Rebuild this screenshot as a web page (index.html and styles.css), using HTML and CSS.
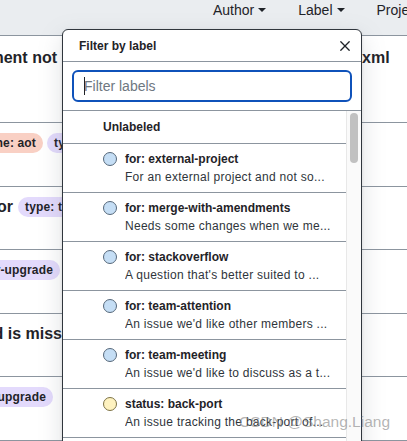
FILE: index.html
```html
<!DOCTYPE html>
<html lang="en">
<head>
<meta charset="utf-8">
<title>Filter by label</title>
<link rel="stylesheet" href="styles.css">
</head>
<body>
<div class="page">
  <header class="topbar">
    <span class="menu">Author<i class="caret"></i></span>
    <span class="menu">Label<i class="caret"></i></span>
    <span class="menu">Projects<i class="caret"></i></span>
  </header>

  <div class="issues">
    <div class="row row-a">
      <div class="cell left pad5"><span class="title">Environment not</span></div>
      <div class="cell mid"></div>
      <div class="cell right"><span class="title">xml</span></div>
    </div>
    <div class="row">
      <div class="cell left gap4"><span class="pill salmon">theme: aot</span><span class="pill lav peek w15">type: task</span></div>
      <div class="cell mid"></div>
      <div class="cell right"></div>
    </div>
    <div class="row">
      <div class="cell left gap5"><span class="title">Processor</span><span class="pill lav peek w44">type: task</span></div>
      <div class="cell mid"></div>
      <div class="cell right"></div>
    </div>
    <div class="row">
      <div class="cell left pad2"><span class="pill lav">type: dependency-upgrade</span></div>
      <div class="cell mid"></div>
      <div class="cell right"></div>
    </div>
    <div class="row">
      <div class="cell left"><span class="title hide-ing">Required field is missing</span></div>
      <div class="cell mid"></div>
      <div class="cell right"></div>
    </div>
    <div class="row">
      <div class="cell left pad9"><span class="pill lav">type: dependency-upgrade</span></div>
      <div class="cell mid"></div>
      <div class="cell right"></div>
    </div>
    <div class="row"></div>
  </div>

  <div class="popup">
    <div class="popup-head">
      <span class="popup-title">Filter by label</span>
      <svg class="close" width="16" height="16" viewBox="0 0 16 16" aria-label="Close"><path d="M3.8 3.8 L12.2 12.2 M12.2 3.8 L3.8 12.2" stroke="#1f2328" stroke-width="1.3" stroke-linecap="round" fill="none"/></svg>
    </div>
    <div class="filter">
      <div class="field">
        <span class="text-caret"></span>
        <input class="field-input" type="text" placeholder="Filter labels">
      </div>
    </div>
    <div class="popup-body">
      <div class="list">
        <div class="item unlabeled">Unlabeled</div>
        <div class="item">
          <span class="dot blue"></span>
          <div class="item-text"><div class="name">for: external-project</div><div class="desc">For an external project and not so...</div></div>
        </div>
        <div class="item">
          <span class="dot blue"></span>
          <div class="item-text"><div class="name">for: merge-with-amendments</div><div class="desc">Needs some changes when we me...</div></div>
        </div>
        <div class="item">
          <span class="dot blue"></span>
          <div class="item-text"><div class="name">for: stackoverflow</div><div class="desc">A question that's better suited to ...</div></div>
        </div>
        <div class="item">
          <span class="dot blue"></span>
          <div class="item-text"><div class="name">for: team-attention</div><div class="desc">An issue we'd like other members ...</div></div>
        </div>
        <div class="item">
          <span class="dot blue"></span>
          <div class="item-text"><div class="name">for: team-meeting</div><div class="desc">An issue we'd like to discuss as a t...</div></div>
        </div>
        <div class="item">
          <span class="dot yellow"></span>
          <div class="item-text"><div class="name">status: back-port</div><div class="desc">An issue tracking the back-port of...</div></div>
        </div>
        <div class="item">
          <span class="dot yellow"></span>
          <div class="item-text"><div class="name">status: blocked</div><div class="desc">An issue that's blocked on an exte...</div></div>
        </div>
      </div>
      <div class="scroll"><div class="thumb"></div></div>
    </div>
  </div>

  <div class="watermark">CSDN @Shang.Liang</div>
</div>
</body>
</html>
```

FILE: styles.css
```css
html, body {
  margin: 0;
  padding: 0;
  width: 407px;
  height: 441px;
  overflow: hidden;
  background: #ffffff;
  font-family: "Liberation Sans", Arial, sans-serif;
  color: #1f2328;
}

.page {
  position: relative;
  width: 407px;
  height: 441px;
  overflow: hidden;
}

/* top bar */
.topbar {
  display: flex;
  gap: 32px;
  height: 35px;
  padding-left: 213px;
  background: #eaedf0;
  border-bottom: 1px solid #8c959f;
  white-space: nowrap;
  font-size: 14px;
  line-height: 20px;
  color: #1f2328;
}
.menu {
  display: flex;
  align-items: center;
  height: 20px;
  flex-shrink: 0;
}
.caret {
  display: inline-block;
  width: 0;
  height: 0;
  margin-left: 4px;
  border-top: 4px solid #1f2328;
  border-left: 4px solid transparent;
  border-right: 4px solid transparent;
}

/* issue rows behind the popup */
.row {
  display: grid;
  grid-template-columns: 62px 300px 45px;
  height: 62.5px;
  border-bottom: 1px solid #8c959f;
}
.row-a { height: 86px; }
.cell {
  display: flex;
  align-items: center;
  height: 20px;
  padding-top: 10px;
  white-space: nowrap;
  overflow: hidden;
}
.row-a .cell { height: 24px; }
.left { justify-content: flex-end; }
.right { justify-content: flex-start; }
.pad2 { padding-right: 2px; }
.pad5 { padding-right: 5px; }
.pad9 { padding-right: 9px; }
.gap4 { gap: 4px; }
.gap5 { gap: 5px; }

.title {
  font-size: 16px;
  font-weight: 700;
  line-height: 24px;
  flex-shrink: 0;
  color: #1f2328;
}
.hide-ing { margin-right: -24px; }

.pill {
  display: inline-flex;
  align-items: center;
  flex-shrink: 0;
  height: 20px;
  padding: 0 7px;
  border-radius: 10px;
  font-size: 12px;
  font-weight: 700;
  line-height: 18px;
  letter-spacing: 0.15px;
  color: #1f2328;
}
.salmon { background: #f9d0c4; }
.lav { background: #e3dafc; }
.peek {
  overflow: hidden;
  padding-right: 0;
  border-radius: 10px 0 0 10px;
  justify-content: flex-start;
}
.w15 { width: 8px; }
.w44 { width: 37px; }

/* popup */
.popup {
  position: absolute;
  left: 62px;
  top: 29px;
  width: 300px;
  height: 440px;
  box-sizing: border-box;
  background: #ffffff;
  border: 1px solid #30363d;
  border-radius: 6px 6px 0 0;
  box-shadow: 0 8px 24px rgba(110, 119, 129, 0.22), 0 1px 3px rgba(31, 35, 40, 0.12);
  overflow: hidden;
  display: flex;
  flex-direction: column;
}
.popup-head {
  display: flex;
  align-items: center;
  justify-content: space-between;
  height: 31px;
  padding: 0 8px 0 16px;
  border-bottom: 1px solid #8c959f;
  flex-shrink: 0;
}
.popup-title {
  font-size: 12px;
  font-weight: 700;
  line-height: 18px;
}
.close { display: block; }

.filter {
  padding: 8px 9px;
  border-bottom: 1px solid #8c959f;
  flex-shrink: 0;
}
.field {
  position: relative;
  height: 32px;
  box-sizing: border-box;
  border: 2px solid #0f52ba;
  border-radius: 6px;
  display: flex;
  align-items: center;
  padding: 0 10px;
}
.field-input {
  flex: 1;
  min-width: 0;
  border: 0;
  outline: none;
  padding: 0;
  margin: 0;
  background: transparent;
  font-family: "Liberation Sans", Arial, sans-serif;
  font-size: 14px;
  line-height: 20px;
  color: #1f2328;
}
.field-input::placeholder { color: #6e7781; }
.text-caret {
  position: absolute;
  left: 10px;
  top: 5px;
  width: 1px;
  height: 18px;
  background: #1f2328;
}

.popup-body {
  display: flex;
  flex: 1;
  min-height: 0;
}
.list {
  flex: 1;
  min-width: 0;
}
.item {
  display: flex;
  align-items: flex-start;
  gap: 8px;
  padding: 6px 16px 6px 40px;
  border-bottom: 1px solid #8c959f;
}
.unlabeled {
  padding: 7px 16px 7px 40px;
  font-size: 12px;
  font-weight: 700;
  line-height: 18px;
}
.dot {
  flex-shrink: 0;
  width: 14px;
  height: 14px;
  box-sizing: border-box;
  margin-top: 2px;
  border-radius: 50%;
}
.blue { background: #c5def5; border: 1px solid #56687a; }
.yellow { background: #fef2c0; border: 1px solid #7d7245; }
.item-text {
  min-width: 0;
  white-space: nowrap;
}
.name {
  font-size: 12px;
  font-weight: 700;
  line-height: 18px;
  color: #1f2328;
}
.desc {
  font-size: 12px;
  line-height: 18px;
  letter-spacing: 0.28px;
  color: #2f353b;
  overflow: hidden;
}

.scroll {
  width: 15px;
  flex-shrink: 0;
  box-sizing: border-box;
  background: #fafafa;
  border-left: 1px solid #e8e8e8;
  padding: 2px 3px 0;
}
.thumb {
  width: 8px;
  height: 50px;
  border-radius: 4px;
  background: #c1c1c1;
}

.watermark {
  position: absolute;
  left: 239px;
  top: 413px;
  font-family: "Liberation Sans", Arial, sans-serif;
  font-size: 15.5px;
  line-height: 18px;
  color: rgba(130, 130, 130, 0.6);
  white-space: nowrap;
}
```
